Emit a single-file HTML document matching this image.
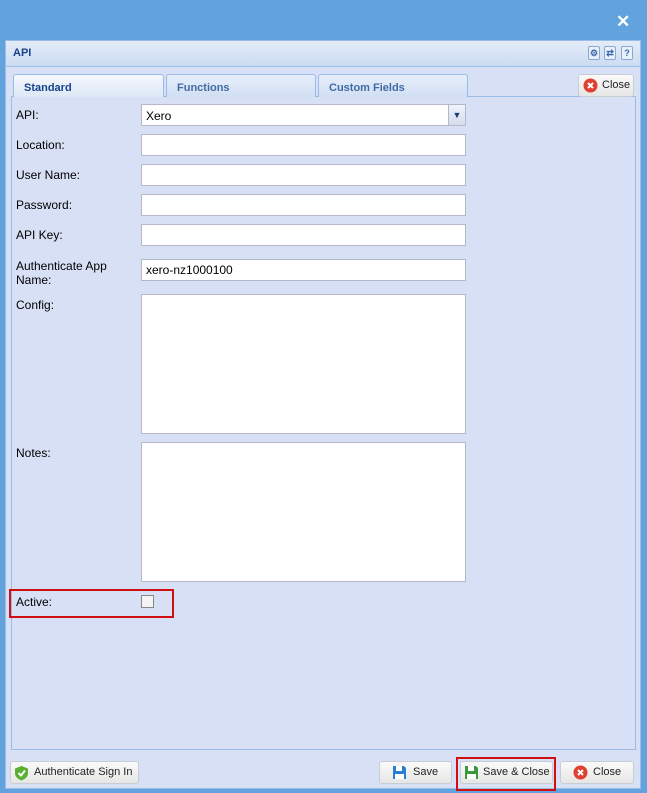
<!DOCTYPE html>
<html><head><style>
*{box-sizing:border-box;margin:0;padding:0}
body{width:647px;height:793px;background:#62a2dd;font-family:"Liberation Sans",sans-serif;font-size:12px;color:#000;position:relative;overflow:hidden}
.abs{position:absolute}
.x{left:616px;top:12px;color:#fff;font-size:17px;font-weight:bold}
.panel{left:5px;top:40px;width:636px;height:749px;background:#d7e0f5;border:1px solid #99bbe8}
.hdr{left:0;top:0;width:634px;height:26px;background:linear-gradient(#e4ecf8,#cddcf2);border-bottom:1px solid #99bbe8}
.hdr b{position:absolute;left:7px;top:6px;color:#15428b;font-size:11px}
.hb{position:absolute;top:5px;width:12px;height:14px;border:1px solid #8aa8d0;border-radius:2px;background:#e8f0fb;font-size:9px;color:#3a66a8;text-align:center;line-height:12px;font-weight:bold}
.tab{position:absolute;top:74px;height:23px;border:1px solid #99bbe8;border-bottom:none;border-radius:3px 3px 0 0;background:linear-gradient(#e6eefa,#d1dff3);color:#416aa3;font-weight:bold;font-size:11px;padding:7px 0 0 10px}
.tab.on{background:linear-gradient(#f5f8fd,#dde7f6);color:#15428b;height:23px;top:74px}
.lbl{position:absolute;left:16px;font-size:12px}
.in{position:absolute;left:141px;width:325px;height:22px;background:#fff;border:1px solid #b5b8c8}
.btn{position:absolute;height:23px;border:1px solid #c8ccd4;border-radius:3px;background:linear-gradient(#fafafa,#e6e6e6);font-size:11px;line-height:21px;color:#222}
.red{position:absolute;border:2px solid #d01010}
</style></head><body>
<div class="abs x">✕</div>
<div class="abs panel">
 <div class="abs hdr"><b>API</b>
  <div class="hb" style="left:582px">⚙</div><div class="hb" style="left:598px">⇄</div><div class="hb" style="left:615px">?</div>
 </div>
</div>
<div class="abs" style="left:11px;top:96px;width:625px;height:654px;border:1px solid #99bbe8"></div>
<div class="tab on" style="left:13px;width:151px">Standard</div>
<div class="tab" style="left:166px;width:150px">Functions</div>
<div class="tab" style="left:318px;width:150px">Custom Fields</div>
<div class="btn" style="left:578px;top:74px;width:56px;padding-left:23px">Close<svg style="position:absolute;left:4px;top:3px" width="15" height="15"><circle cx="7.5" cy="7.5" r="7" fill="#e04030"/><path d="M5 5l5 5M10 5l-5 5" stroke="#fff" stroke-width="2"/></svg></div>
<div class="lbl" style="top:108px">API:</div>
<div class="in" style="top:104px;padding:4px 4px;font-size:12px">Xero<div style="position:absolute;right:0;top:0;width:17px;height:20px;background:linear-gradient(#f0f3fa,#d5dceb);border-left:1px solid #b5b8c8;color:#1b3d7a;font-size:9px;text-align:center;line-height:20px">▼</div></div>
<div class="lbl" style="top:138px">Location:</div><div class="in" style="top:134px"></div>
<div class="lbl" style="top:168px">User Name:</div><div class="in" style="top:164px"></div>
<div class="lbl" style="top:198px">Password:</div><div class="in" style="top:194px"></div>
<div class="lbl" style="top:228px">API Key:</div><div class="in" style="top:224px"></div>
<div class="lbl" style="top:259px;line-height:14px">Authenticate App<br>Name:</div><div class="in" style="top:259px;padding:3px 4px">xero-nz1000100</div>
<div class="lbl" style="top:298px">Config:</div><div class="in" style="top:294px;height:140px"></div>
<div class="lbl" style="top:446px">Notes:</div><div class="in" style="top:442px;height:140px"></div>
<div class="lbl" style="top:595px">Active:</div>
<div class="abs" style="left:141px;top:595px;width:13px;height:13px;border:1px solid #888;background:#f4f4f4"></div>
<div class="red" style="left:9px;top:589px;width:165px;height:29px"></div>
<div class="btn" style="left:10px;top:761px;width:129px;padding-left:23px">Authenticate Sign In<svg style="position:absolute;left:3px;top:3px" width="15" height="16"><path d="M7.5 1L14 3.5V8c0 4-3 6-6.5 7.5C4 14 1 12 1 8V3.5z" fill="#5ab030"/><path d="M4.5 8l2.5 2.5 4-5" stroke="#fff" stroke-width="2" fill="none"/></svg></div>
<div class="btn" style="left:379px;top:761px;width:73px;padding-left:33px">Save<svg style="position:absolute;left:12px;top:3px" width="15" height="15"><path d="M1 1h11l2 2v11H1z" fill="#2a7ed8"/><rect x="4" y="1" width="6" height="5" fill="#fff"/><rect x="3" y="9" width="9" height="5" fill="#fff"/></svg></div>
<div class="btn" style="left:460px;top:761px;width:93px;padding-left:22px">Save &amp; Close<svg style="position:absolute;left:3px;top:3px" width="15" height="15"><path d="M1 1h11l2 2v11H1z" fill="#3a9a3a"/><rect x="4" y="1" width="6" height="5" fill="#fff"/><rect x="3" y="9" width="9" height="5" fill="#fff"/></svg></div>
<div class="red" style="left:456px;top:757px;width:100px;height:34px"></div>
<div class="btn" style="left:560px;top:761px;width:74px;padding-left:32px">Close<svg style="position:absolute;left:12px;top:3px" width="15" height="15"><circle cx="7.5" cy="7.5" r="7" fill="#e04030"/><path d="M5 5l5 5M10 5l-5 5" stroke="#fff" stroke-width="2"/></svg></div>
</body></html>
